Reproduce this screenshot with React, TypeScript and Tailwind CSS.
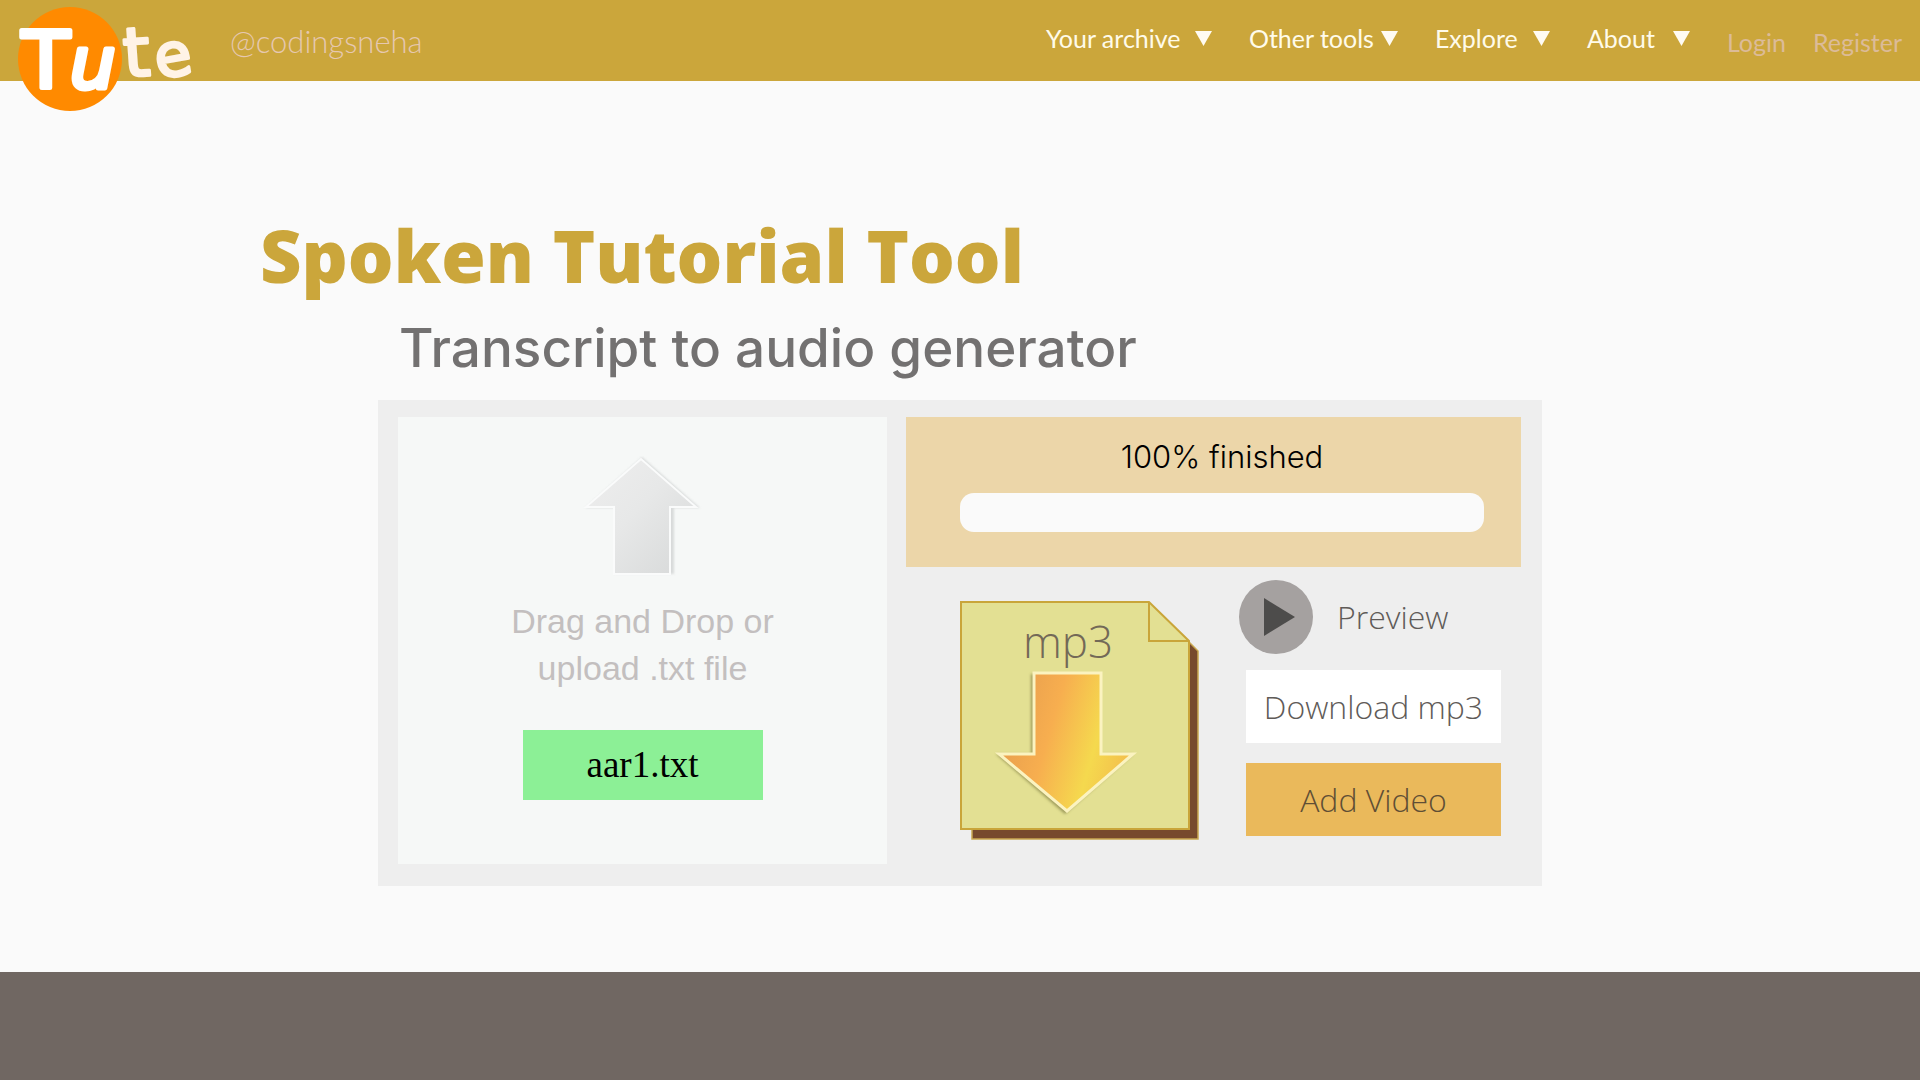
import React from "react";

function Logo() {
  return (
    <svg
      viewBox="0 0 200 120"
      className="absolute left-0 top-0 h-[120px] w-[200px]"
      role="img"
      aria-label="Tute"
    >
      <circle cx="70" cy="59" r="52" fill="#ff8a00" />
      <g fontFamily="'DejaVu Sans', sans-serif" strokeLinejoin="round">
        <g fill="#ffffff" stroke="#ffffff" strokeWidth="5">
          <text x="22" y="88" fontSize="78">T</text>
          <text x="70" y="88" fontSize="72" fontStyle="italic">u</text>
        </g>
        <g fill="#fff3e6" stroke="#fff3e6" strokeWidth="3">
          <text x="123" y="76" fontSize="68" transform="rotate(-4 138 52)">t</text>
          <text x="155" y="76" fontSize="60" transform="rotate(-10 174 60)">e</text>
        </g>
      </g>
    </svg>
  );
}

const menus = [
  { label: "Your archive", width: "w-[166px]" },
  { label: "Other tools", width: "w-[149px]" },
  { label: "Explore", width: "w-[115px]" },
  { label: "About", width: "w-[103px]" },
];

function Header() {
  return (
    <header className="relative flex h-[81px] items-start bg-[#cba63b] pl-[230px] pr-[18px] font-['Lato',sans-serif]">
      <a href="#home" className="absolute left-0 top-0">
        <Logo />
      </a>
      <a href="#profile" className="pt-[21px] text-[31px] font-light leading-[40px] text-[#e6c8b0]">
        @codingsneha
      </a>
      <nav className="ml-auto flex items-start gap-[37px] text-[25px] leading-8">
        {menus.map((m) => (
          <button
            key={m.label}
            type="button"
            className={`mt-[22px] flex items-center justify-between whitespace-nowrap text-[#fffbea] ${m.width}`}
          >
            {m.label}
            <svg viewBox="0 0 17 15" className="h-[15px] w-[17px]" aria-hidden="true">
              <path d="M0 0H17L8.500 15Z" fill="#fffbf2" />
            </svg>
          </button>
        ))}
        <div className="mt-[26px] flex gap-[27px] text-[#dcbb98]">
          <a href="#login">Login</a>
          <a href="#register">Register</a>
        </div>
      </nav>
    </header>
  );
}

function UploadArrow() {
  return (
    <svg viewBox="0 0 120 120" className="h-[120px] w-[120px]" aria-hidden="true">
      <defs>
        <linearGradient id="upFill" x1="0" y1="0" x2="1" y2="1">
          <stop offset="0" stopColor="#eeeeee" />
          <stop offset="0.45" stopColor="#e7e8e8" />
          <stop offset="1" stopColor="#d6d8d8" />
        </linearGradient>
        <filter id="upShade" x="-10%" y="-10%" width="120%" height="120%">
          <feGaussianBlur stdDeviation="0.8" />
        </filter>
      </defs>
      <path
        d="M59 1L117 52H91V118H32V52H2Z"
        fill="#cfd1d1"
        filter="url(#upShade)"
        opacity="0.75"
      />
      <path
        d="M58 3L113 51H87V118H31V51H3Z"
        fill="url(#upFill)"
        stroke="#fafbfb"
        strokeWidth="2"
      />
    </svg>
  );
}

function Mp3File() {
  return (
    <svg viewBox="0 0 240 240" className="h-[240px] w-[240px] shrink-0" role="img" aria-label="mp3 file">
      <defs>
        <linearGradient id="downFill" x1="0" y1="0.3" x2="1" y2="0.6">
          <stop offset="0" stopColor="#e59c4e" />
          <stop offset="0.38" stopColor="#f7ae4f" />
          <stop offset="0.72" stopColor="#f5d94e" />
          <stop offset="1" stopColor="#f3bd4c" />
        </linearGradient>
        <filter id="downShade" x="-10%" y="-10%" width="120%" height="120%">
          <feGaussianBlur stdDeviation="1.500" />
        </filter>
      </defs>
      <path d="M12 11H199L238 50V238H12Z" fill="#774a2d" stroke="#c9a850" strokeWidth="1.500" />
      <path d="M1 1H189L229 40V228H1Z" fill="#e3e093" stroke="#c9a53a" strokeWidth="2" />
      <path d="M189 1V40H229" fill="none" stroke="#c9a53a" strokeWidth="2" />
      <text
        x="108"
        y="57"
        textAnchor="middle"
        fontFamily="'Open Sans', sans-serif"
        fontSize="44"
        fontWeight="300"
        fill="#736957"
      >
        mp3
      </text>
      <path
        d="M71 73H139V153H173L105 213L36 153H71Z"
        fill="#7d7a3f"
        opacity="0.7"
        filter="url(#downShade)"
      />
      <path
        d="M74 72H141V153H173L107 210L39 153H74Z"
        fill="url(#downFill)"
        stroke="#fbf3c0"
        strokeWidth="3"
      />
    </svg>
  );
}

function DropZone() {
  return (
    <section className="flex flex-col items-center bg-[#f6f8f7] pb-16 pt-[39px]">
      <label htmlFor="transcript" className="flex cursor-pointer flex-col items-center">
        <UploadArrow />
        <span className="mt-[22px] text-center font-['Liberation_Sans',sans-serif] text-[34px] leading-[47px] text-[#c3bfbf]">
          Drag and Drop or
          <br />
          upload .txt file
        </span>
      </label>
      <input id="transcript" type="file" accept=".txt" className="sr-only" />
      <button
        type="button"
        className="mt-[38px] h-[70px] w-[240px] bg-[#8cf096] font-['Liberation_Serif',serif] text-[37px] leading-[48px] text-black"
      >
        aar1.txt
      </button>
    </section>
  );
}

function Result() {
  return (
    <section className="flex flex-col">
      <div className="h-[150px] bg-[#ecd6a9] pl-[54px] pr-[37px] pt-5 font-['Inter',sans-serif]">
        <p id="status" className="text-center text-[31px] font-light leading-10 text-black">
          100% finished
        </p>
        <div
          role="progressbar"
          aria-labelledby="status"
          aria-valuenow={100}
          className="mt-4 h-[39px] rounded-[14px] bg-[#fafafa]"
        />
      </div>
      <div className="flex justify-between pl-[54px] pr-5 pt-[13px] font-['Open_Sans',sans-serif] text-[32px] font-light leading-10 text-[#5f5b58]">
        <div className="pt-[21px]">
          <Mp3File />
        </div>
        <div className="flex w-[255px] flex-col">
          <button type="button" className="-ml-[7px] flex items-center gap-6 text-left">
            <svg viewBox="0 0 74 74" className="h-[74px] w-[74px]" aria-hidden="true">
              <circle cx="37" cy="37" r="37" fill="#a5a1a0" />
              <path d="M25 18V56L56 37Z" fill="#4d4c4b" />
            </svg>
            Preview
          </button>
          <button type="button" className="mt-4 h-[73px] whitespace-nowrap bg-white">
            Download mp3
          </button>
          <button type="button" className="mt-5 h-[73px] bg-[#eab95b] text-[#5f4e35]">
            Add Video
          </button>
        </div>
      </div>
    </section>
  );
}

export default function App() {
  return (
    <div className="flex min-h-screen flex-col bg-[#fafafa]">
      <Header />
      <main className="flex-1 pb-[86px] pt-[126px]">
        <div className="mx-auto max-w-[1400px]">
          <h1 className="font-['Open_Sans',sans-serif] text-[72px] font-extrabold leading-[96px] text-[#cba63b]">
            Spoken Tutorial Tool
          </h1>
          <h2 className="mt-[13px] pl-[139px] font-['Inter',sans-serif] text-[53px] font-medium leading-[64px] text-[#737171]">
            Transcript to audio generator
          </h2>
        </div>
        <div className="mx-auto mt-5 grid max-w-[1164px] grid-cols-[489fr_615fr] gap-[19px] bg-[#eeeeee] pb-[22px] pl-5 pr-[21px] pt-[17px]">
          <DropZone />
          <Result />
        </div>
      </main>
      <footer className="h-[108px] bg-[#706762]" />
    </div>
  );
}
